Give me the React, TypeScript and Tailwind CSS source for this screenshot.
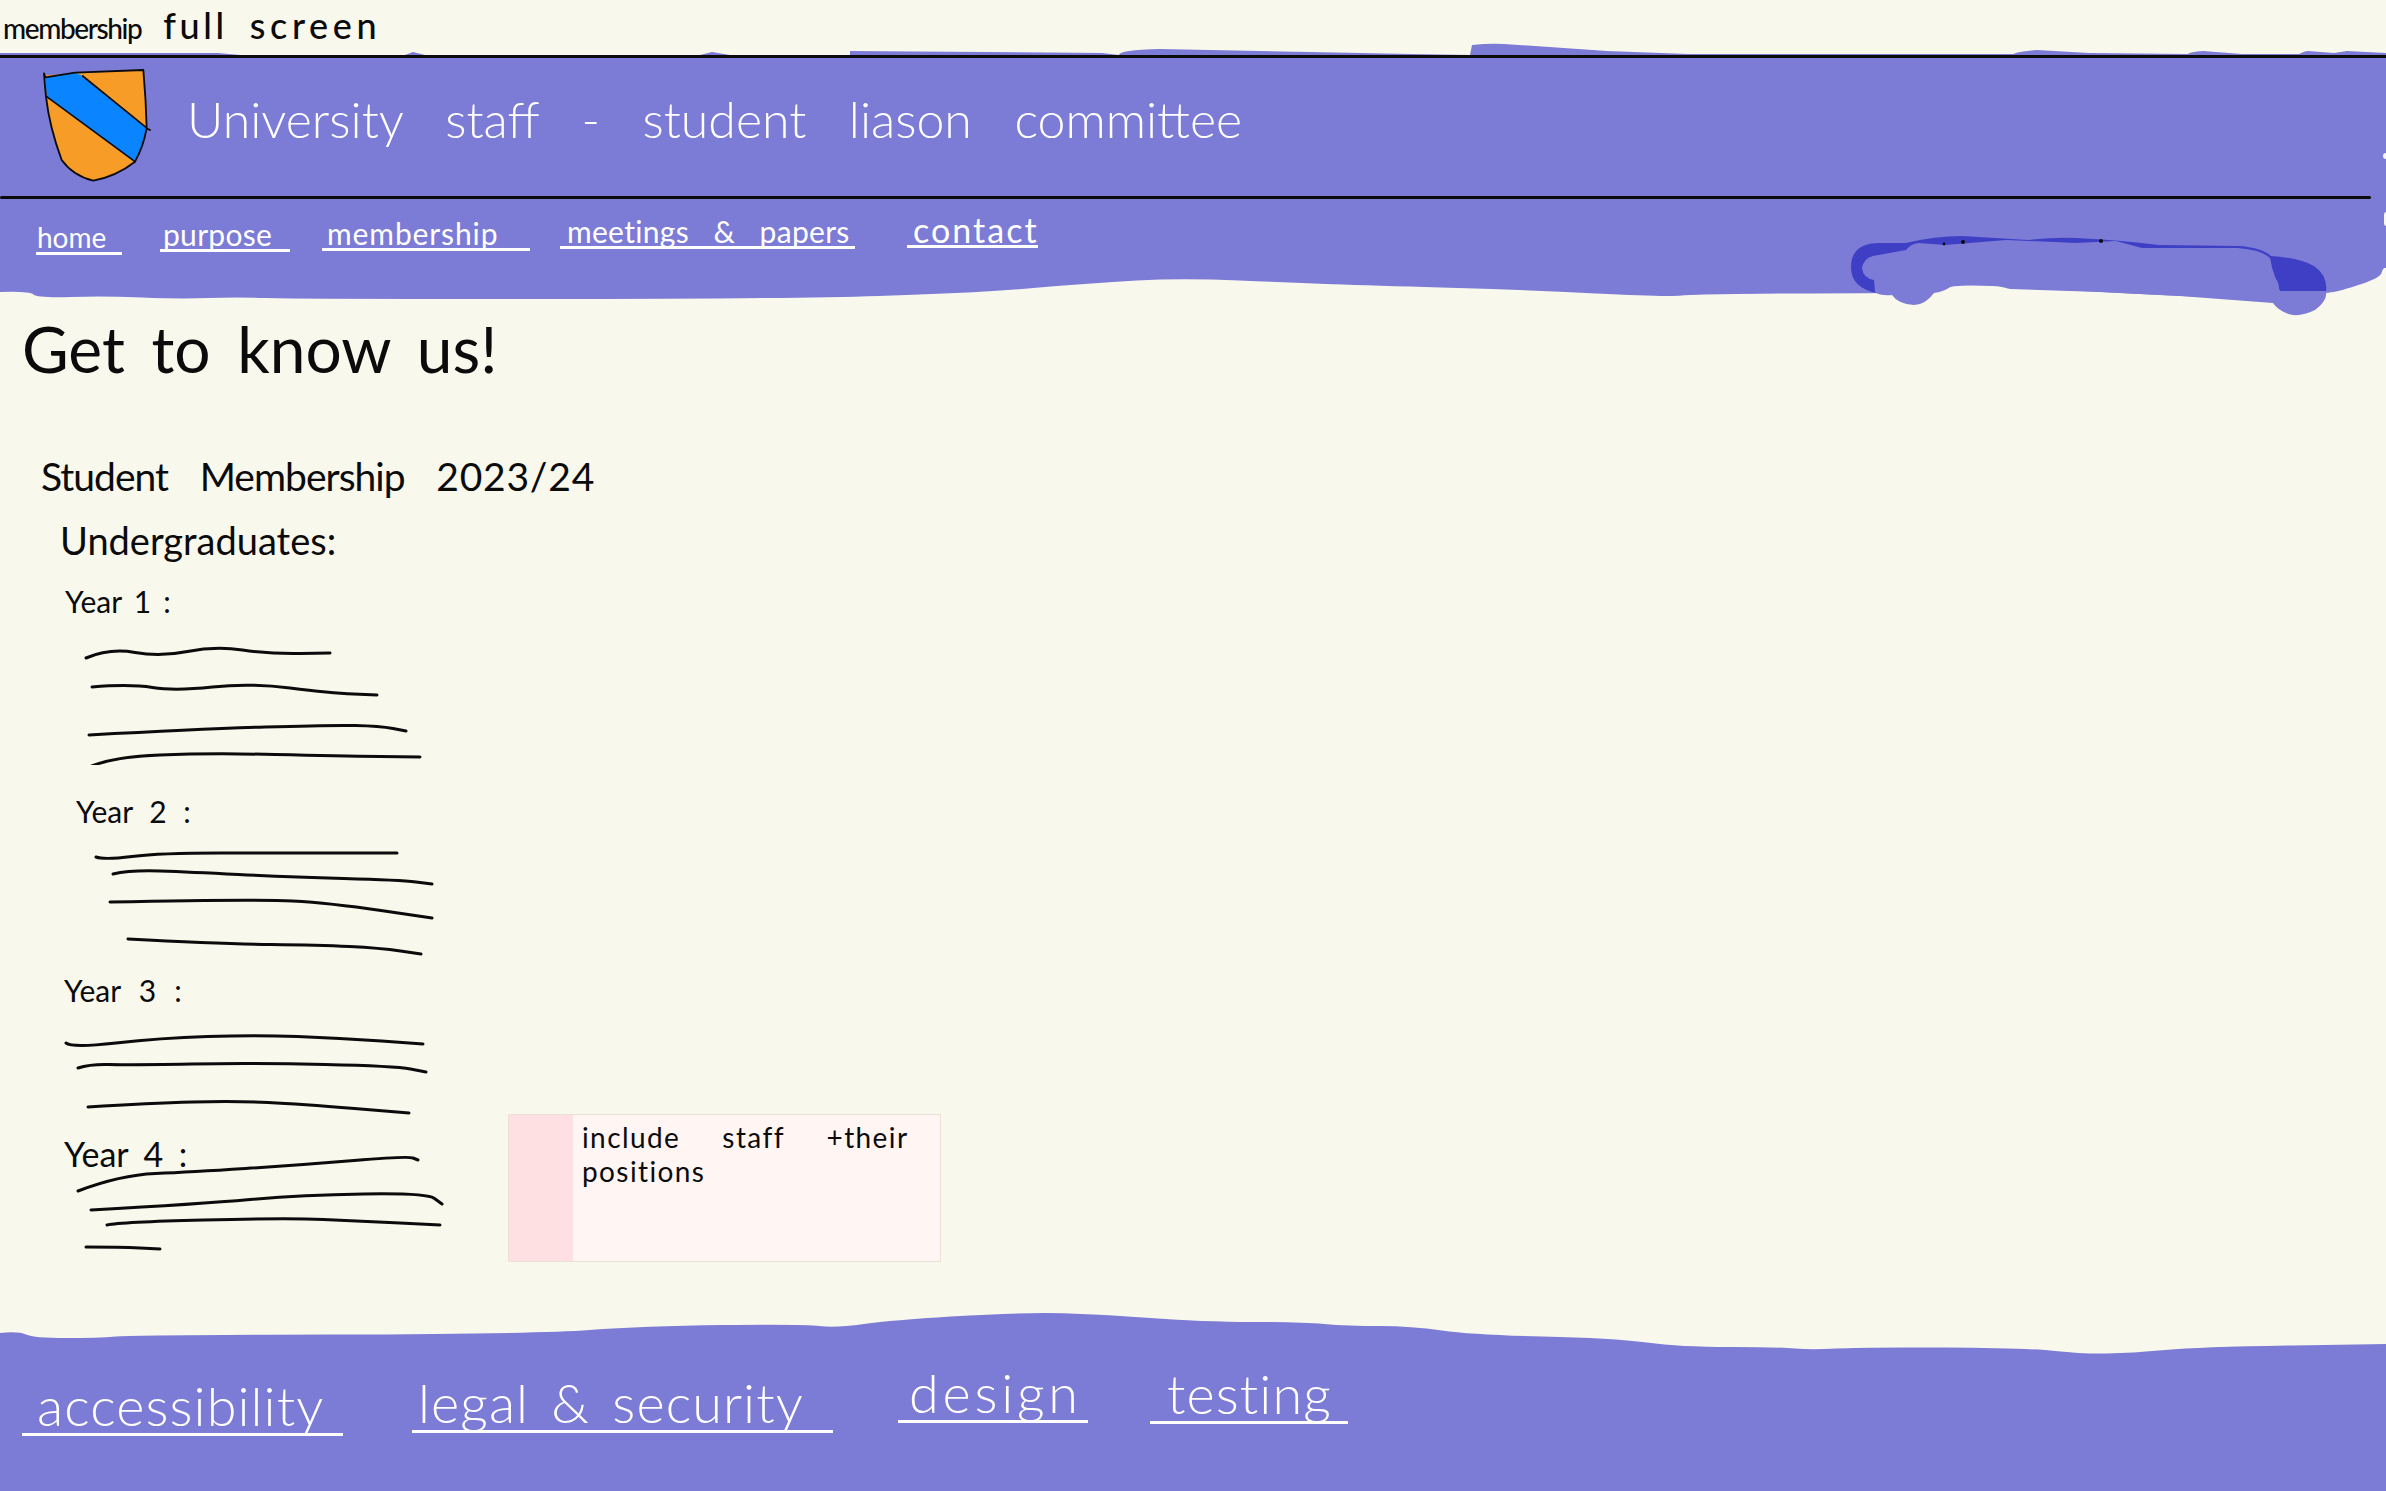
type Point = [number, number];

// smooth pen stroke through the points, midpoints as curve ends
function wave(points: Point[]) {
  let d = `M${points[0][0]} ${points[0][1]}`;
  for (let i = 1; i < points.length - 1; i++) {
    const [x, y] = points[i];
    const [nx, ny] = points[i + 1];
    d += ` Q${x} ${y} ${(x + nx) / 2} ${(y + ny) / 2}`;
  }
  const last = points[points.length - 1];
  return `${d} L${last[0]} ${last[1]}`;
}

const navLinks = [
  { label: "home", className: "ml-[36px] mt-[23px] w-[86px] pl-[1px] text-[28px]" },
  { label: "purpose", className: "ml-[38px] mt-[20px] w-[130px] pl-[3px] tracking-[0.01em]" },
  { label: "membership", className: "ml-[32px] mt-[19px] w-[208px] pl-[5px] tracking-[0.03em]" },
  { label: "meetings & papers", className: "ml-[30px] mt-[17px] w-[295px] pl-[7px] [word-spacing:0.55em] tracking-[0.01em]" },
  { label: "contact", className: "ml-[52px] mt-[16px] w-[131px] pl-[6px] text-[34px] tracking-[0.06em]" },
];

const footerLinks = [
  { label: "accessibility", className: "ml-[22px] mt-[23px] w-[321px] pl-[15px]" },
  { label: "legal & security", className: "ml-[69px] mt-[20px] w-[421px] pl-[6px] [word-spacing:0.12em]" },
  { label: "design", className: "ml-[65px] mt-[10px] w-[190px] pl-[11px] tracking-[0.07em]" },
  { label: "testing", className: "ml-[62px] mt-[11px] w-[198px] pl-[17px]" },
];

const yearOne: Point[][] = [
  [[86, 658], [110, 648], [160, 657], [215, 646], [270, 654], [330, 653]],
  [[92, 687], [130, 684], [175, 691], [250, 683], [330, 693], [377, 695]],
  [[89, 735], [200, 729], [330, 725], [380, 726], [406, 731]],
  [[87, 768], [110, 757], [210, 753], [340, 756], [420, 757]],
];

const yearTwo: Point[][] = [
  [[96, 857], [104, 860], [160, 853], [280, 853], [397, 853]],
  [[113, 874], [130, 870], [190, 872], [287, 877], [400, 880], [432, 884]],
  [[110, 902], [255, 899], [330, 903], [432, 918]],
  [[128, 939], [223, 944], [319, 945], [380, 948], [421, 954]],
];

const yearThree: Point[][] = [
  [[66, 1043], [72, 1048], [160, 1038], [255, 1035], [340, 1038], [423, 1044]],
  [[78, 1068], [90, 1064], [128, 1065], [255, 1063], [395, 1066], [426, 1072]],
  [[88, 1107], [150, 1103], [236, 1101], [300, 1104], [409, 1113]],
];

const yearFour: Point[][] = [
  [[78, 1191], [120, 1175], [191, 1172], [300, 1165], [408, 1156], [418, 1160]],
  [[91, 1210], [200, 1204], [300, 1195], [427, 1193], [442, 1204]],
  [[107, 1225], [120, 1222], [287, 1218], [360, 1221], [440, 1225]],
  [[86, 1247], [120, 1247], [160, 1249]],
];

const navEdge: Point[] = [
  [0, 292], [29, 291], [38, 298], [103, 296], [181, 299], [235, 297], [298, 299], [781, 299],
  [976, 293], [1091, 283], [1182, 278], [1297, 283], [1389, 286], [1527, 290], [1665, 297], [1699, 294],
  [1877, 293], [1934, 293], [1954, 284], [2030, 288], [2100, 292], [2180, 296], [2273, 299], [2326, 293],
  [2340, 291], [2380, 278], [2383, 268], [2386, 268],
];

const footerEdge: Point[] = [
  [0, 1333], [18, 1331], [34, 1338], [98, 1338], [134, 1335], [536, 1334], [643, 1326], [804, 1324],
  [835, 1328], [893, 1320], [1009, 1313], [1080, 1313], [1205, 1322], [1300, 1322], [1348, 1326],
  [1411, 1326], [1473, 1335], [1612, 1338], [1681, 1347], [1778, 1347], [1812, 1350], [1861, 1347],
  [2027, 1348], [2083, 1354], [2131, 1353], [2200, 1347], [2386, 1344],
];

function Scribbles({ lines, top, height }: { lines: Point[][]; top: number; height: number }) {
  return (
    <svg viewBox={`0 ${top} 460 ${height}`} width={460} height={height} className="block shrink-0" fill="none">
      {lines.map((line, i) => (
        <path key={i} d={wave(line)} stroke="#0b0b0b" strokeWidth={3} strokeLinecap="round" />
      ))}
    </svg>
  );
}

function Shield() {
  return (
    <svg viewBox="60 48 336 360" className="h-[120px] w-[112px] shrink-0" fill="none">
      <path d="M74 76 L370 60 Q378 150 380 235 Q370 290 345 335 Q290 378 220 392 Q160 378 125 330 Q88 230 78 140 Z" fill="#f79c26" />
      <path d="M76 82 L165 68 L188 78 L378 232 Q375 290 345 335 L80 140 Z" fill="#0a84ff" />
      <path d="M188 78 L378 232 M80 140 L345 335" stroke="#0b0b0b" strokeWidth={5} strokeLinecap="round" />
      <path
        d="M72 70 L76 82 L165 68 L370 60 Q378 150 380 235 L390 240 M380 235 Q370 290 345 335 Q290 378 220 392 Q160 378 125 330 Q88 230 78 140 Q74 100 72 70"
        stroke="#0b0b0b"
        strokeWidth={5.5}
        strokeLinecap="round"
        strokeLinejoin="round"
      />
    </svg>
  );
}

function Smudge() {
  return (
    <svg viewBox="1840 230 500 90" className="absolute right-[46px] top-[31px] h-[90px] w-[500px]">
      <path
        d="M1880 243 L1906 243 Q1935 236 1962 236 L2028 240 Q2055 237 2076 238 Q2120 240 2159 245 L2240 246 Q2262 248 2271 256 Q2300 258 2314 266 Q2328 276 2326 291 L2280 291 L2270 262 L1880 272 L1877 293 Q1851 288 1851 267 Q1851 243 1880 243 Z"
        fill="#3f3fc6"
      />
      <path
        d="M1862 268 Q1864 258 1873 256 L1906 250 Q1912 243 1919 243 L1945 245 L2006 240 L2076 243 L2116 241 L2142 248 L2238 248 Q2262 250 2270 258 Q2273 268 2271 275 Q2280 280 2279 291 L2326 291 Q2328 300 2315 310 Q2303 316 2293 315 Q2279 312 2273 303 L2180 296 L2100 292 L2010 289 L1990 284 L1954 284 Q1945 292 1934 293 Q1925 305 1914 305 Q1898 304 1892 295 Q1880 296 1875 292 L1874 280 Q1863 278 1862 268 Z"
        fill="#7c7bd6"
      />
      <circle cx="1944" cy="244" r="1.4" fill="#0b0b0b" />
      <circle cx="1963" cy="242" r="2" fill="#0b0b0b" />
      <circle cx="2101" cy="241" r="2" fill="#0b0b0b" />
    </svg>
  );
}

export default function App() {
  return (
    <div className="h-[1491px] w-full overflow-hidden bg-[#f9f8ec] font-[Lato,sans-serif] text-[#0b0b0b]">
      <div className="h-[55px] whitespace-nowrap pl-[3px] pt-[10px] text-[28px] font-medium leading-[30px]">
        <span className="tracking-[-0.05em]">membership</span>
        <span className="ml-[22px] text-[36px] tracking-[0.1em]">full</span>
        <span className="ml-[22px] text-[36px] tracking-[0.13em]">screen</span>
      </div>

      <header className="relative bg-[#7c7bd6] text-white">
        <svg viewBox="0 44 2386 12" preserveAspectRatio="none" className="absolute bottom-full left-0 h-[12px] w-full">
          <path
            d="M850 56 L850 52 L1102 54 L1119 56 Q1119 51 1160 50 L1412 55 L1470 56 L1472 46 Q1490 44 1504 45 L1607 52 L1688 55 L2013 55 Q2020 52 2037 51 L2089 54 L2188 55 Q2190 53 2203 52 L2242 55 L2299 55 Q2305 52 2308 52 L2334 54 L2347 52 L2386 54 L2386 56 Z M0 56 L0 54 L218 54 L240 56 Z M405 56 L413 53 L425 56 Z M700 56 L712 53 L730 56 Z"
            fill="#7c7bd6"
          />
        </svg>
        <div className="h-[3px] bg-[#0b0b0b]" />
        <div className="flex h-[138px] items-start">
          <div className="ml-[40px] mt-[8px]">
            <Shield />
          </div>
          <h2 className="ml-[35px] mt-[36px] whitespace-nowrap text-[50px] font-light leading-[50px] [word-spacing:0.58em]">
            University staff - student liason committee
          </h2>
        </div>
        <div className="mr-[15px] h-[3px] rounded-full bg-[#0b0b0b]" />
        <nav className="relative flex h-[69px] items-start text-[30px] font-normal leading-[30px]">
          {navLinks.map((link) => (
            <a key={link.label} className={`block h-[33px] whitespace-nowrap border-b-[3px] border-white ${link.className}`}>
              {link.label}
            </a>
          ))}
          <Smudge />
        </nav>
        <div className="absolute right-[-3px] top-[98px] size-[6px] rounded-full bg-[#f9f8ec]" />
        <div className="absolute right-[-3px] top-[157px] h-[14px] w-[5px] rounded-full bg-[#f9f8ec]" />
      </header>

      <svg viewBox="0 268 2386 32" className="block h-[32px] w-full">
        <path d={`${wave(navEdge)} L0 268 Z`} fill="#7c7bd6" />
      </svg>

      <main className="flex h-[1010px] items-end">
        <div className="w-[508px] shrink-0 self-start pt-[17px]">
          <h1 className="ml-[22px] h-[64px] whitespace-nowrap text-[64px] font-normal leading-[64px] [word-spacing:0.16em]">
            Get to know us!
          </h1>
          <h2 className="ml-[41px] mt-[76px] h-[39px] whitespace-nowrap text-[39px] leading-[39px] tracking-[-0.025em] [word-spacing:0.58em]">
            Student Membership <span className="tracking-[0.02em]">2023/24</span>
          </h2>
          <h3 className="ml-[60px] mt-[25px] h-[38px] whitespace-nowrap text-[38px] leading-[38px]">Undergraduates:</h3>

          <h4 className="ml-[65px] mt-[27px] h-[30px] text-[30px] leading-[30px] [word-spacing:0.15em]">Year 1 :</h4>
          <div className="mt-[29px]">
            <Scribbles lines={yearOne} top={645} height={120} />
          </div>

          <h4 className="ml-[76px] mt-[31px] h-[30px] text-[30px] leading-[30px] [word-spacing:0.3em]">Year 2 :</h4>
          <div className="mt-[19px]">
            <Scribbles lines={yearTwo} top={845} height={115} />
          </div>

          <h4 className="ml-[64px] mt-[15px] h-[30px] text-[30px] leading-[30px] [word-spacing:0.35em]">Year 3 :</h4>
          <div className="mt-[25px]">
            <Scribbles lines={yearThree} top={1030} height={90} />
          </div>

          <h4 className="ml-[64px] mt-[19px] h-[30px] text-[34px] leading-[30px] [word-spacing:0.2em]">Year 4 :</h4>
          <div className="-mt-[14px]">
            <Scribbles lines={yearFour} top={1155} height={100} />
          </div>
        </div>

        <aside className="mb-[48px] flex h-[148px] w-[433px] shrink-0 border border-[#f0dfd8] bg-[#fff5f3]">
          <div className="w-[64px] shrink-0 bg-[#ffe0e2]" />
          <p className="whitespace-nowrap pl-[9px] pt-[5px] text-[28px] leading-[34px] tracking-[0.05em] [word-spacing:1.2em]">
            include staff +their
            <br />
            positions
          </p>
        </aside>
      </main>

      <svg viewBox="0 1310 2386 46" className="block h-[46px] w-full">
        <path d={`${wave(footerEdge)} L2386 1356 L0 1356 Z`} fill="#7c7bd6" />
      </svg>
      <footer className="flex h-[135px] items-start bg-[#7c7bd6] text-[54px] font-light leading-[54px] tracking-[0.02em] text-white">
        {footerLinks.map((link) => (
          <a key={link.label} className={`block h-[57px] whitespace-nowrap border-b-[3px] border-white ${link.className}`}>
            {link.label}
          </a>
        ))}
      </footer>
    </div>
  );
}
